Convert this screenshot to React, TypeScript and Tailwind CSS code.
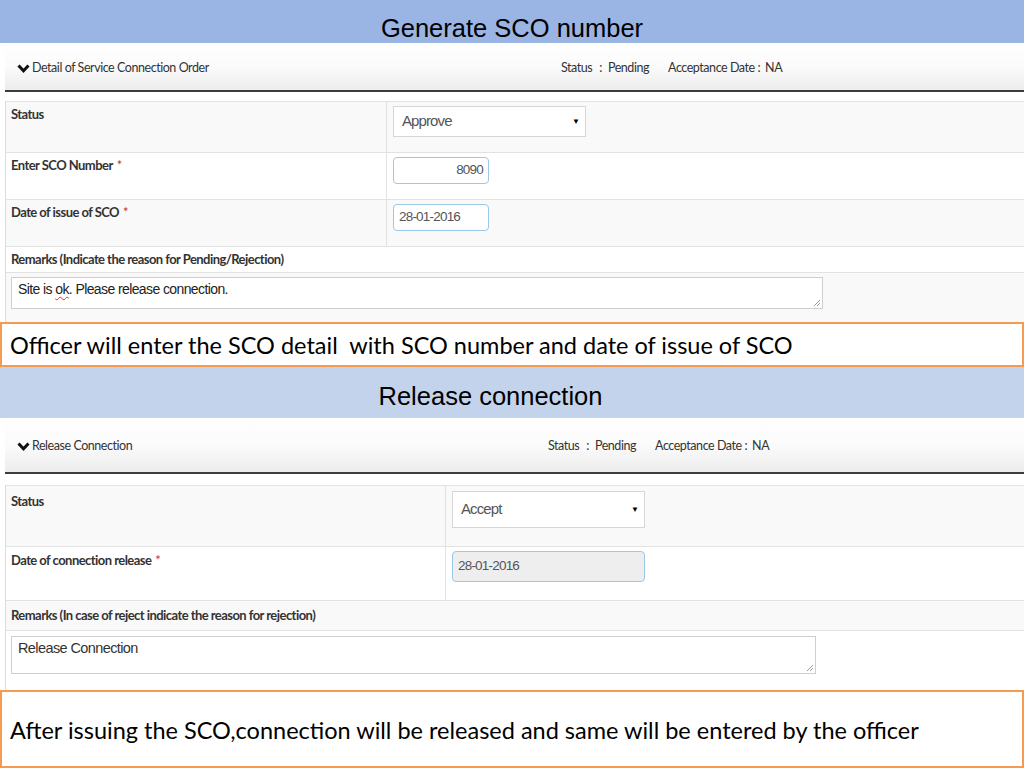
import React from 'react';

const narrow = { fontFamily: 'Lato, "Liberation Sans", sans-serif' };
const arial = { fontFamily: '"Liberation Sans", Arial, sans-serif' };
const calibri = { fontFamily: 'Lato, "Open Sans", sans-serif' };

const Chevron = () => (
    <svg width="13" height="9" viewBox="0 0 13 9" className="mr-[2px]">
        <polyline points="1.5,1.5 6.5,6.8 11.5,1.5" fill="none" stroke="#111" strokeWidth="3" />
    </svg>
);

const Req = () => <span className="text-[#c9302c] ml-[4px] font-normal">*</span>;

const PanelHeader: React.FC<{ title: string; h: string; statusLeft: string }> = ({ title, h, statusLeft }) => (
    <div className="ml-[5px]">
        <div className={`${h} flex items-center pt-[3px] bg-gradient-to-b from-white via-[#fbfbfb] to-[#ececec] text-[12.5px] tracking-[-0.45px] text-[#333]`} style={narrow}>
            <div className={`${statusLeft} flex items-center pl-[12px]`}>
                <Chevron />
                <span>{title}</span>
            </div>
            <span>Status</span>
            <span className="ml-[7px]">:</span>
            <span className="ml-[6px]">Pending</span>
            <span className="ml-[19px]">Acceptance Date :</span>
            <span className="ml-[5px]">NA</span>
        </div>
        <div className="h-[2px] bg-[#3c3c3c]" />
    </div>
);

const Select: React.FC<{ value: string; h: string }> = ({ value, h }) => (
    <div className={`w-[193px] ${h} flex items-center justify-between bg-white border border-[#d6d6d6] pl-[8px] pr-[6px] text-[15px] tracking-[-0.9px] text-[#555]`} style={arial}>
        <span>{value}</span>
        <span className="text-[8px] text-black">▼</span>
    </div>
);

const Input: React.FC<{ value: string; w: string; h: string; right?: boolean; disabled?: boolean }> = ({ value, w, h, right, disabled }) => (
    <div
        className={`${w} ${h} flex items-center rounded-[4px] border border-[#9cc8e8] px-[5px] text-[13.5px] tracking-[-0.8px] text-[#555] ${right ? 'justify-end' : ''} ${disabled ? 'bg-[#eeeeee]' : 'bg-white'}`}
        style={arial}
    >
        {value}
    </div>
);

const TextArea: React.FC<{ w: string; h: string; children: React.ReactNode }> = ({ w, h, children }) => (
    <div className={`relative ${w} ${h} bg-white border border-[#cfcfcf] pl-[6px] pt-[1px] text-[14px] tracking-[-0.6px] text-[#222]`} style={arial}>
        {children}
        <svg className="absolute right-[1px] bottom-[1px]" width="8" height="8" viewBox="0 0 8 8">
            <line x1="1" y1="7" x2="7" y2="1" stroke="#999" strokeWidth="1" />
            <line x1="4" y1="7" x2="7" y2="4" stroke="#999" strokeWidth="1" />
        </svg>
    </div>
);

const Label: React.FC<{ children: React.ReactNode }> = ({ children }) => (
    <div className="text-[13px] tracking-[-0.55px] font-bold text-[#333] pl-[5px]" style={narrow}>{children}</div>
);

export default function App() {
    return (
        <div className="w-[1024px] h-[768px] bg-white overflow-hidden flex flex-col">
            {/* Generate SCO number */}
            <div className="h-[43px] shrink-0 bg-[#9ab4e3] flex items-end justify-center pb-[2px] leading-none text-[25.5px] text-black" style={arial}>
                Generate SCO number
            </div>
            <PanelHeader title="Detail of Service Connection Order" h="h-[47px]" statusLeft="w-[556px]" />
            <div className="h-[9px] shrink-0" />
            <div className="ml-[5px] border-l border-[#dcdcdc]">
                <div className="h-[52px] flex bg-[#f9f9f9] border-t border-b border-[#e2e2e2]">
                    <div className="w-[381px] border-r border-[#e2e2e2] pt-[3px]"><Label>Status</Label></div>
                    <div className="pl-[6px] pt-[4px]"><Select value="Approve" h="h-[31px]" /></div>
                </div>
                <div className="h-[47px] flex bg-white border-b border-[#e2e2e2]">
                    <div className="w-[381px] border-r border-[#e2e2e2] pt-[3px]"><Label>Enter SCO Number<Req /></Label></div>
                    <div className="pl-[6px] pt-[4px]"><Input value="8090" w="w-[96px]" h="h-[27px]" right /></div>
                </div>
                <div className="h-[47px] flex bg-[#f9f9f9] border-b border-[#e2e2e2]">
                    <div className="w-[381px] border-r border-[#e2e2e2] pt-[3px]"><Label>Date of issue of SCO<Req /></Label></div>
                    <div className="pl-[6px] pt-[4px]"><Input value="28-01-2016" w="w-[96px]" h="h-[27px]" /></div>
                </div>
                <div className="h-[26px] flex items-center bg-white border-b border-[#e2e2e2]">
                    <Label>Remarks (Indicate the reason for Pending/Rejection)</Label>
                </div>
                <div className="h-[49px] bg-[#f9f9f9] pl-[5px] pt-[4px]">
                    <TextArea w="w-[812px]" h="h-[32px]">
                        Site is <span className="underline decoration-wavy decoration-[#d33] decoration-1 underline-offset-2">ok</span>. Please release connection.
                    </TextArea>
                </div>
            </div>
            <div className="h-[45px] shrink-0 border-2 border-[#f59a4e] bg-white flex items-center pl-[8px] pt-[2px] text-[23.5px] text-black" style={calibri}>
                Officer will enter the SCO detail&nbsp; with SCO number and date of issue of SCO
            </div>

            {/* Release connection */}
            <div className="h-[51px] shrink-0 bg-[#c3d3ec] flex items-end justify-center pr-[43px] pb-[9px] leading-none text-[25.5px] text-black" style={arial}>
                Release connection
            </div>
            <PanelHeader title="Release Connection" h="h-[54px]" statusLeft="w-[543px]" />
            <div className="h-[11px] shrink-0" />
            <div className="ml-[5px] border-l border-[#dcdcdc]">
                <div className="h-[62px] flex bg-[#f9f9f9] border-t border-b border-[#e2e2e2]">
                    <div className="w-[440px] border-r border-[#e2e2e2] pt-[6px]"><Label>Status</Label></div>
                    <div className="pl-[6px] pt-[5px]"><Select value="Accept" h="h-[37px]" /></div>
                </div>
                <div className="h-[54px] flex bg-white border-b border-[#e2e2e2]">
                    <div className="w-[440px] border-r border-[#e2e2e2] pt-[4px]"><Label>Date of connection release<Req /></Label></div>
                    <div className="pl-[6px] pt-[4px]"><Input value="28-01-2016" w="w-[193px]" h="h-[31px]" disabled /></div>
                </div>
                <div className="h-[30px] flex items-center bg-[#f9f9f9] border-b border-[#e2e2e2]">
                    <Label>Remarks (In case of reject indicate the reason for rejection)</Label>
                </div>
                <div className="h-[59px] bg-white pl-[5px] pt-[5px]">
                    <TextArea w="w-[805px]" h="h-[38px]">
                        <span className="text-[14.5px] text-[#333]">Release Connection</span>
                    </TextArea>
                </div>
            </div>
            <div className="flex-1 border-2 border-[#f59a4e] bg-white flex items-center pl-[8px] pt-[4px] text-[23.5px] text-black" style={calibri}>
                After issuing the SCO,connection will be released and same will be entered by the officer
            </div>
        </div>
    );
}
